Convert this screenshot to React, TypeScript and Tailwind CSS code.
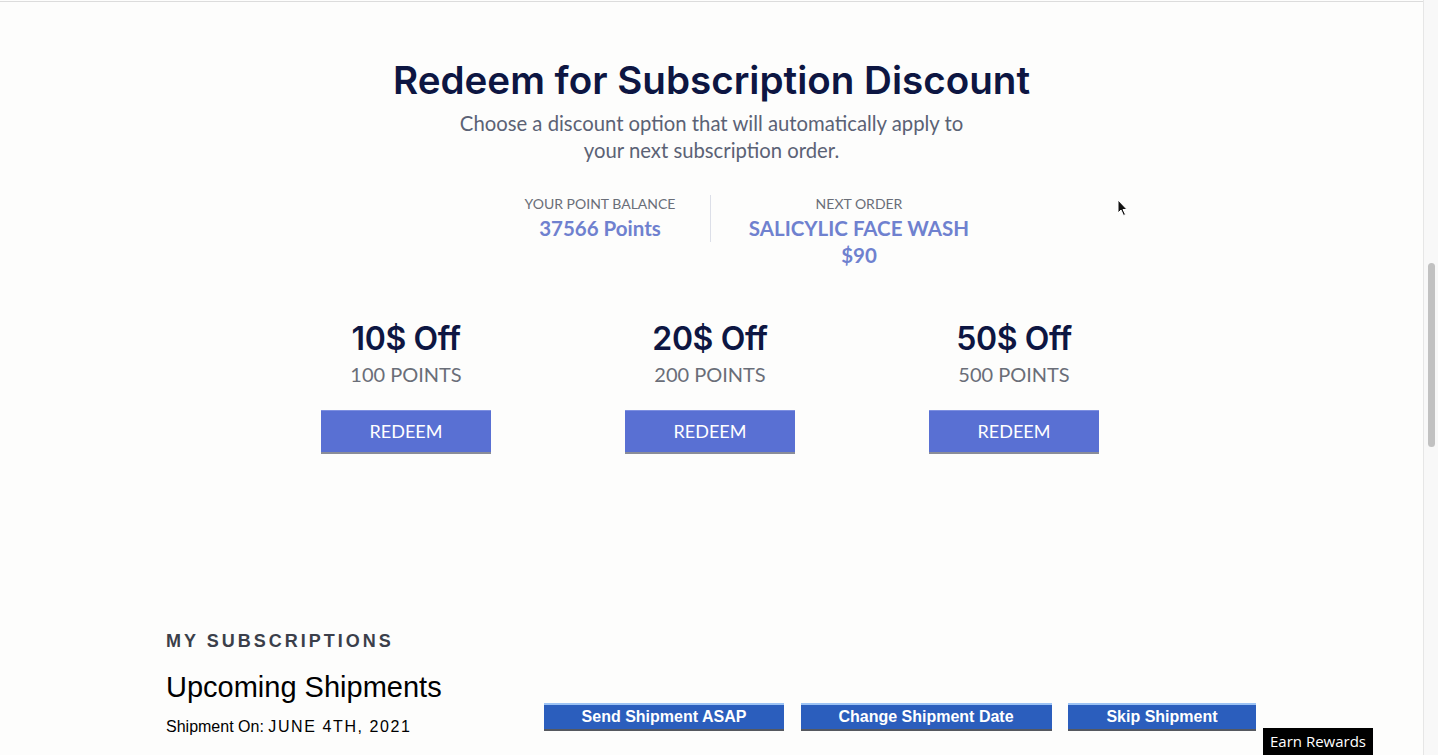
import React from "react";

const offers = [
  { title: "10$ Off", points: "100 POINTS" },
  { title: "20$ Off", points: "200 POINTS" },
  { title: "50$ Off", points: "500 POINTS" },
];

const shipmentActions = [
  { label: "Send Shipment ASAP", width: "w-[240px]" },
  { label: "Change Shipment Date", width: "w-[251px]" },
  { label: "Skip Shipment", width: "w-[188px]" },
];

const App: React.FC = () => {
  return (
    <div className="flex h-[755px] w-full overflow-hidden bg-[#fdfdfc]">
      <main className="relative flex-1 border-t border-[#dcdcdc] mt-px">
        {/* heading */}
        <div className="flex flex-col items-center pt-[55px]">
          <h1 className="font-['Inter',sans-serif] text-[38.6px] font-semibold leading-[46px] text-[#0d1642]">
            Redeem for Subscription Discount
          </h1>
          <p className="mt-[7px] w-[540px] text-center font-['Lato',sans-serif] text-[20.3px] leading-[27px] text-[#5b6275]">
            Choose a discount option that will automatically apply to your next subscription order.
          </p>
        </div>

        {/* balance / next order */}
        <div className="mt-[31px] flex pl-[500px] font-['Lato',sans-serif]">
          <div className="w-[200px] text-center">
            <div className="text-[14px] leading-[18px] text-[#6a6e78]">YOUR POINT BALANCE</div>
            <div className="mt-[2px] text-[20.5px] font-bold leading-[27px] text-[#6f81cf]">37566 Points</div>
          </div>
          <div className="ml-[10px] h-[47px] w-px bg-[#dcdfe8]"></div>
          <div className="ml-[18px] w-[260px] text-center">
            <div className="text-[14px] leading-[18px] text-[#6a6e78]">NEXT ORDER</div>
            <div className="mt-[2px] text-[20.5px] font-bold leading-[27px] text-[#6f81cf]">
              SALICYLIC FACE WASH
              <br />
              $90
            </div>
          </div>
        </div>

        {/* offers */}
        <div className="ml-[254px] mt-[50px] grid w-[912px] grid-cols-3">
          {offers.map((o) => (
            <div key={o.title} className="flex flex-col items-center">
              <div className="font-['Inter',sans-serif] text-[32px] font-semibold leading-[40px] text-[#0d1642] tracking-[-0.4px]">
                {o.title}
              </div>
              <div className="mt-[1px] font-['Lato',sans-serif] text-[20px] leading-[28px] text-[#6a6e78]">{o.points}</div>
              <button className="mt-[22px] h-[44px] w-[170px] border-t border-b-2 border-t-[#7d8fe0] border-b-[#8a8d99] bg-[#5970d3] font-['Lato',sans-serif] text-[18px] text-white">
                REDEEM
              </button>
            </div>
          ))}
        </div>

        {/* subscriptions */}
        <div className="mt-[176px] pl-[166px] font-['Liberation_Sans',Arial,sans-serif]">
          <div className="text-[18px] font-bold leading-[22px] tracking-[3px] text-[#3b3f4a]">MY SUBSCRIPTIONS</div>
          <div className="mt-[18px] flex items-start">
            <div className="w-[378px]">
              <div className="text-[29px] leading-[34px] text-black">Upcoming Shipments</div>
              <div className="mt-[13px] text-[16px] leading-[20px] text-black">
                Shipment On: <span className="tracking-[1.6px]">JUNE 4TH, 2021</span>
              </div>
            </div>
            <div className="mt-[33px] flex gap-[16.5px]">
              {shipmentActions.map((a) => (
                <button
                  key={a.label}
                  className={`${a.width} h-[28px] border-t-2 border-b-2 border-t-[#9cc3f5] border-b-[#55585f] bg-[#2b5ebd] text-[16px] font-bold leading-[24px] text-white`}
                >
                  {a.label}
                </button>
              ))}
            </div>
          </div>
        </div>

        {/* mouse cursor */}
        <svg className="absolute left-[1117px] top-[197px]" width="12" height="18" viewBox="0 0 12 18">
          <path d="M1 1 L1 14 L4 11 L6.5 16.5 L8.5 15.5 L6 10.5 L10 10.5 Z" fill="#111" stroke="#fff" strokeWidth="1" />
        </svg>

        <div className="absolute bottom-0 right-[50px] flex h-[27px] w-[110px] items-center justify-center bg-black font-['Open_Sans',sans-serif] text-[15px] text-white">
          Earn Rewards
        </div>
      </main>

      {/* scrollbar */}
      <div className="flex h-[755px] w-[15px] justify-center border-l border-[#e6e6e6] bg-[#f8f8f8]">
        <div className="mt-[263px] h-[184px] w-[7px] rounded-full bg-[#c1c1c1]"></div>
      </div>
    </div>
  );
};

export default App;
